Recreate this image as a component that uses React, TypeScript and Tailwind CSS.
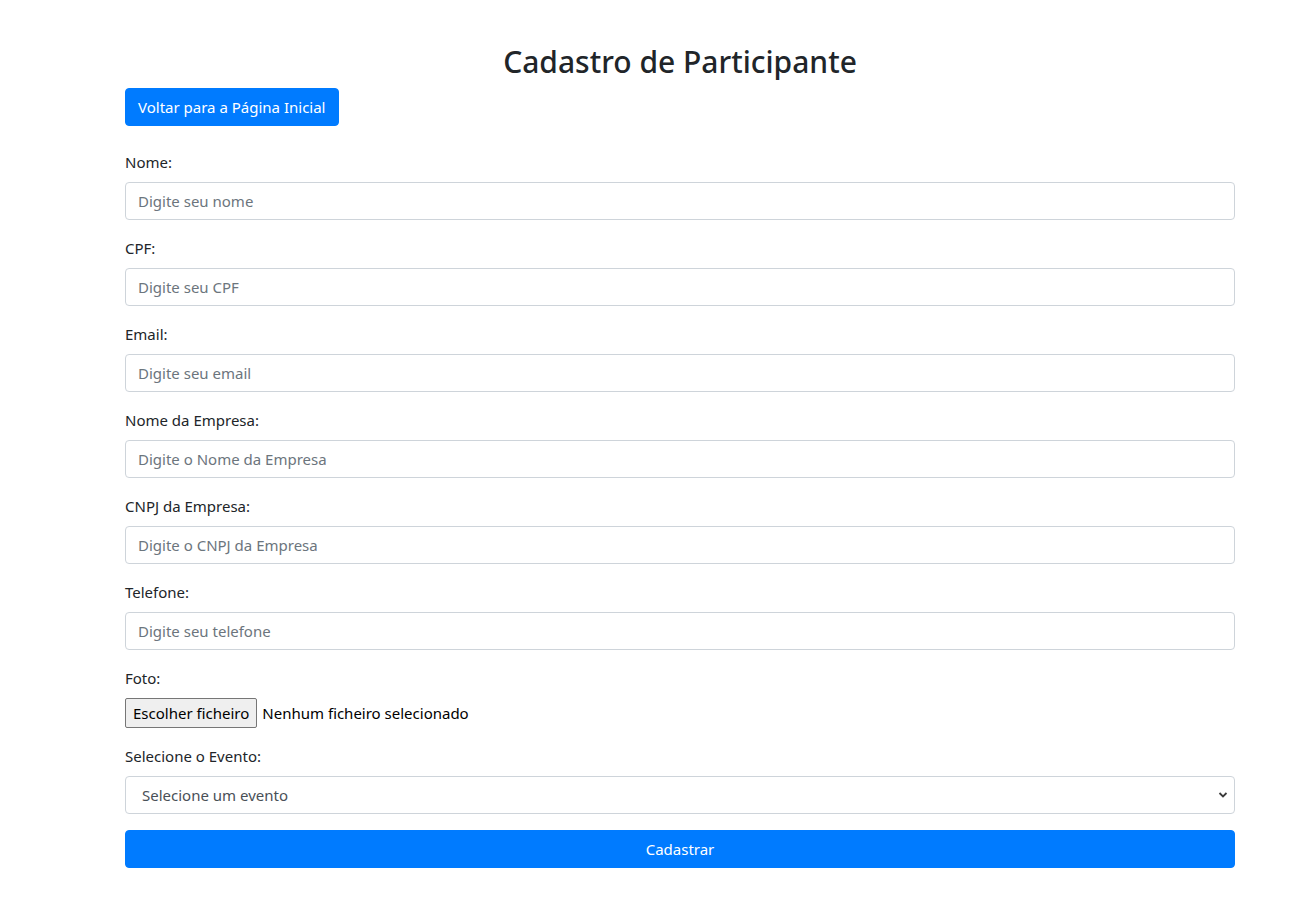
import type { FunctionComponent } from "react";

const fields = [
  { label: "Nome:", placeholder: "Digite seu nome", type: "text" },
  { label: "CPF:", placeholder: "Digite seu CPF", type: "text" },
  { label: "Email:", placeholder: "Digite seu email", type: "email" },
  { label: "Nome da Empresa:", placeholder: "Digite o Nome da Empresa", type: "text" },
  { label: "CNPJ da Empresa:", placeholder: "Digite o CNPJ da Empresa", type: "text" },
  { label: "Telefone:", placeholder: "Digite seu telefone", type: "tel" },
];

const App: FunctionComponent = () => {
  return (
    <div className="min-h-screen bg-white text-[#212529] text-[15px] leading-[24px] font-['Noto_Sans',sans-serif]">
      <div className="ml-[125px] w-[1110px] pt-[43px]">
        {/* Title */}
        <h1 className="text-center text-[30px] leading-[38px] font-medium mb-[7px]">Cadastro de Participante</h1>

        <button className="inline-block bg-[#007bff] text-white rounded-[4px] px-[12px] h-[38px] leading-[36px] border border-[#007bff] mb-[24px]">
          Voltar para a Página Inicial
        </button>

        <form onSubmit={(e) => e.preventDefault()}>
          {fields.map((f) => (
            <div key={f.label} className="mb-[16px]">
              <label className="block mb-[8px]">{f.label}</label>
              <input
                type={f.type}
                placeholder={f.placeholder}
                className="block w-full h-[38px] px-[12px] border border-[#ced4da] rounded-[4px] text-[#495057] placeholder:text-[#6c757d] outline-none"
              />
            </div>
          ))}

          {/* Foto */}
          <div className="mb-[16px]">
            <label className="block mb-[8px]">Foto:</label>
            <div className="flex items-center h-[30px]">
              <button
                type="button"
                className="h-[30px] px-[7px] bg-[#efefef] border border-[#767676] rounded-[2px] text-black leading-none"
              >
                Escolher ficheiro
              </button>
              <span className="ml-[5px] text-black">Nenhum ficheiro selecionado</span>
            </div>
          </div>

          {/* Evento */}
          <div className="mb-[16px]">
            <label className="block mb-[8px]">Selecione o Evento:</label>
            <div className="relative">
              <select className="block w-full h-[38px] pl-[16px] pr-[30px] border border-[#ced4da] rounded-[4px] text-[#495057] bg-white appearance-none outline-none">
                <option>Selecione um evento</option>
              </select>
              <svg
                className="absolute right-[7px] top-[15px] pointer-events-none"
                width="10"
                height="8"
                viewBox="0 0 10 8"
              >
                <path d="M1.5 2 L5 5.5 L8.5 2" fill="none" stroke="#3b3b3b" strokeWidth="1.8" />
              </svg>
            </div>
          </div>

          <button
            type="submit"
            className="block w-full h-[38px] bg-[#007bff] text-white rounded-[4px] border border-[#007bff]"
          >
            Cadastrar
          </button>
        </form>
      </div>
    </div>
  );
};

export default App;
